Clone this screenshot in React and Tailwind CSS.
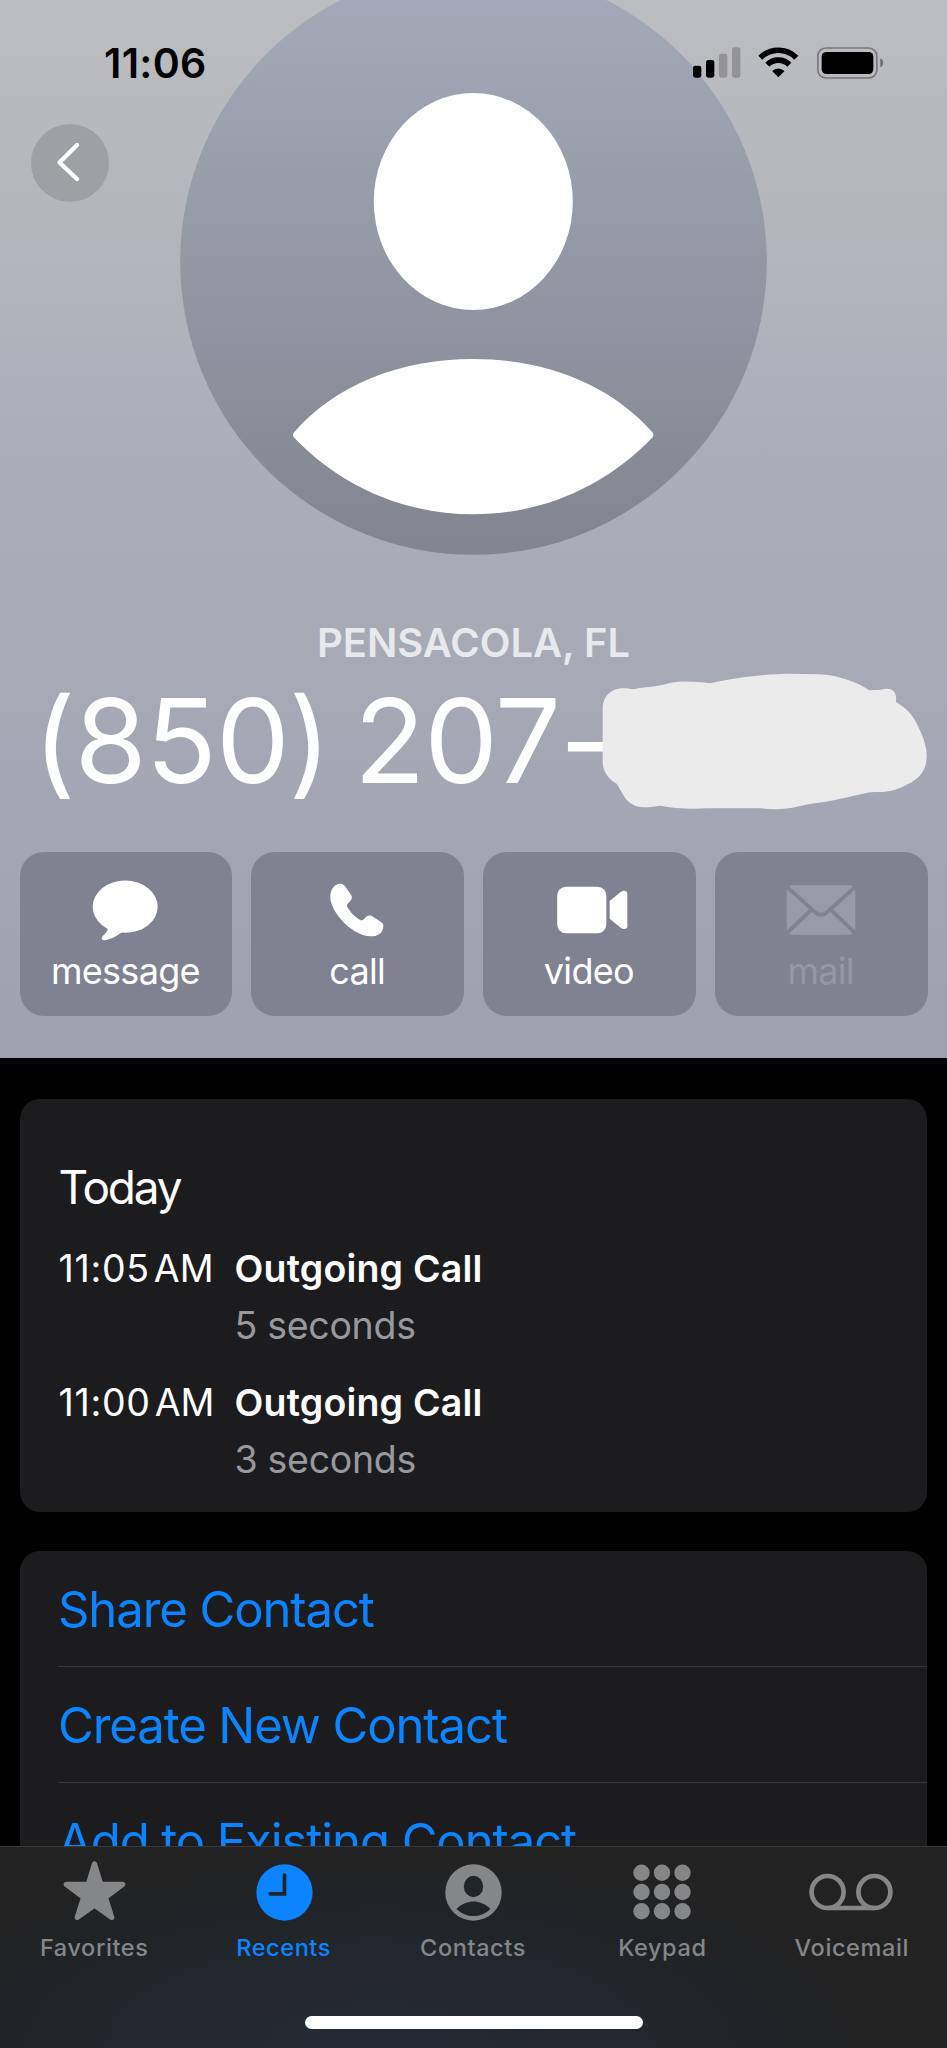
function SignalIcon() {
  return (
    <svg width="48" height="31" viewBox="656 142 144 93">
      <rect x="656" y="198" width="25" height="36" rx="7" fill="#000" />
      <rect x="695" y="181" width="25" height="53" rx="7" fill="#000" />
      <rect x="734" y="162" width="25" height="72" rx="7" fill="#939397" />
      <rect x="773" y="143" width="25" height="91" rx="7" fill="#939397" />
    </svg>
  );
}

function WifiIcon() {
  return (
    <svg width="41" height="31" viewBox="851 142 123 93" fill="none" stroke="#000" strokeWidth="17">
      <path d="M858 174A76.5 76.5 0 0 1 966 174" />
      <path d="M879 195A47 47 0 0 1 945 195" />
      <path d="M912 233L893.5 214A26 26 0 0 1 930.5 214Z" fill="#000" stroke="none" />
    </svg>
  );
}

function BatteryIcon() {
  return (
    <svg width="67" height="32" viewBox="1028 140 201 96">
      <rect x="1030.500" y="143" width="177" height="90" rx="24" fill="none" stroke="#77777b" strokeWidth="5" />
      <rect x="1042" y="155" width="155" height="66" rx="14" fill="#000" />
      <path d="M1218 174C1229 177 1229 198 1218 201Z" fill="#6b6b6f" />
    </svg>
  );
}

function Avatar() {
  return (
    <svg className="-mt-8 shrink-0" width="587" height="587" viewBox="180 -32 587 587">
      <defs>
        <linearGradient id="avatar" x1="0" y1="0" x2="0" y2="1">
          <stop offset="0" stopColor="#a5abba" />
          <stop offset="1" stopColor="#82858f" />
        </linearGradient>
      </defs>
      <circle cx="473.500" cy="261.500" r="293.300" fill="url(#avatar)" />
      <ellipse cx="473.300" cy="201.500" rx="99.500" ry="108.500" fill="#fff" />
      <path
        d="M293.500 433C335 385 400 359 473.300 359S611 385 653 433Q654 435.500 652.500 437.500C604 488 540 514.300 473.300 514.300S342 488 294 437.500Q292 435.500 293.500 433Z"
        fill="#fff"
      />
    </svg>
  );
}

function MessageIcon() {
  return (
    <svg className="mr-0.5" width="66" height="61" viewBox="277 149 198 183" fill="currentColor">
      <ellipse cx="376.500" cy="229" rx="97.500" ry="78.500" />
      <path d="M326 290C325 303 315 311 307 320C304 326 308 330 316 329.500C335 327 352 316 368 305Z" />
    </svg>
  );
}

function PhoneIcon() {
  return (
    <svg className="mr-0.5" width="54" height="54" viewBox="989 164 162 162" fill="currentColor">
      <path d="M990 205C990 182 1003 166 1020 166C1027 166 1032 170 1036 176L1051 198C1057 207 1055 212 1048 220L1041 228C1038 232 1041 236 1044 241C1053 254 1065 266 1078 274C1084 277 1087 276 1091 272L1097 266C1104 260 1112 261 1119 266L1142 281C1150 286 1150 294 1148 301C1144 316 1130 324 1112 324C1080 324 1045 300 1021 272C1003 250 990 226 990 205Z" />
    </svg>
  );
}

function VideoIcon() {
  return (
    <svg className="ml-1.5" width="71" height="48" viewBox="248 169 213 144" fill="currentColor">
      <rect x="248.500" y="171" width="147.500" height="140" rx="27" />
      <path d="M406 214L438 188C447 180 459 182 459 192V290C459 299 447 301 439 294L406 267Z" />
    </svg>
  );
}

function MailIcon() {
  return (
    <svg width="70" height="50" viewBox="936 166 210 150">
      <rect x="938" y="167" width="206" height="148" rx="16" fill="#979aa8" />
      <g fill="none" stroke="#808292" strokeWidth="11.500">
        <path d="M937 170L1022 247Q1041 264 1060 247L1145 170" />
        <path d="M1013 239L937 312" />
        <path d="M1069 239L1145 312" />
      </g>
    </svg>
  );
}

function StarIcon() {
  return (
    <svg className="-mt-[3px]" width="63" height="60" viewBox="188 180 189 180">
      <path
        d="M282.500 189L301 250H367L315 289L334 349L282.500 312L231 349L250 289L198 250H264Z"
        fill="currentColor"
        stroke="currentColor"
        strokeWidth="16"
        strokeLinejoin="round"
      />
    </svg>
  );
}

function ClockIcon() {
  return (
    <svg className="ml-px" width="57" height="57" viewBox="766.500 190.500 171 171">
      <circle cx="852" cy="276" r="84.500" fill="currentColor" />
      <path d="M852 224V280H809" fill="none" stroke="#202529" strokeWidth="11" strokeLinecap="round" />
    </svg>
  );
}

function ContactIcon() {
  return (
    <svg className="ml-px" width="57" height="57" viewBox="445 1863.500 57 57">
      <circle cx="473.500" cy="1892" r="28.200" fill="currentColor" />
      <ellipse cx="473.500" cy="1886" rx="9.700" ry="10.700" fill="#202529" />
      <path d="M456.500 1908.500C462 1903 468 1901 473.500 1901S485 1903 490.500 1908.500A24 24 0 0 1 456.500 1908.500Z" fill="#202529" />
    </svg>
  );
}

function KeypadIcon() {
  return (
    <svg width="58" height="56" viewBox="0 0 58 56" fill="currentColor">
      {[8.7, 28, 47.2].map((y) =>
        [8.5, 29, 49.5].map((x) => <circle key={`${x}-${y}`} cx={x} cy={y} r="8.200" />)
      )}
    </svg>
  );
}

function VoicemailIcon() {
  return (
    <svg className="mr-0.5" width="84" height="38" viewBox="0 0 84 38" fill="none" stroke="currentColor" strokeWidth="4.700">
      <circle cx="18.600" cy="19" r="16" />
      <circle cx="65.400" cy="19" r="16" />
      <path d="M18.600 35H65.400" />
    </svg>
  );
}

const actions = [
  { label: "message", icon: MessageIcon },
  { label: "call", icon: PhoneIcon },
  { label: "video", icon: VideoIcon },
  { label: "mail", icon: MailIcon, disabled: true },
];

const calls = [
  { time: "11:05", type: "Outgoing Call", duration: "5 seconds" },
  { time: "11:00", type: "Outgoing Call", duration: "3 seconds" },
];

const tabs = [
  { label: "Favorites", icon: StarIcon },
  { label: "Recents", icon: ClockIcon, active: true },
  { label: "Contacts", icon: ContactIcon },
  { label: "Keypad", icon: KeypadIcon },
  { label: "Voicemail", icon: VoicemailIcon },
];

function StatusBar() {
  return (
    <div className="absolute inset-x-0 top-0 flex items-start justify-between pl-[104px] pr-[63px] pt-[38px]">
      <span className="text-[41px] leading-[50px] font-semibold tracking-[0.3px] text-black">11:06</span>
      <div className="mt-[9px] flex items-start">
        <SignalIcon />
        <span className="ml-[17px]"><WifiIcon /></span>
        <span className="ml-[18px]"><BatteryIcon /></span>
      </div>
    </div>
  );
}

function ContactHeader() {
  return (
    <header className="relative flex h-[1058px] shrink-0 flex-col items-center overflow-hidden bg-[linear-gradient(180deg,#bcbdc1_0%,#b5b6bb_20%,#afb3bc_29%,#a9abb7_54%,#a4a6b3_76%,#9fa1ae_100%)]">
      <Avatar />
      <StatusBar />
      <button className="absolute left-[31px] top-[124px] flex h-[78px] w-[78px] items-center justify-center rounded-full bg-[#9fa0a4]">
        <svg className="-mt-0.5 mr-1" width="24" height="40" viewBox="0 0 24 40" fill="none" stroke="#fff" strokeWidth="4.300" strokeLinecap="round" strokeLinejoin="round">
          <path d="M21 3L3.500 20.500L21 37" />
        </svg>
      </button>

      <p className="mt-16 text-[40px] leading-[48px] font-semibold tracking-[-0.050px] whitespace-nowrap text-[#e8e9ec]">PENSACOLA, FL</p>

      <div className="relative mt-[3px] w-full pl-[33px]">
        <h1 className="text-[117px] leading-[142px] font-normal tracking-[-1.100px] [word-spacing:-8px] whitespace-nowrap text-white">(850) 207-</h1>
        <svg className="absolute left-[602px] top-[3px]" width="326" height="138" viewBox="384 218 978 414">
          <path
            d="M386 320C388 285 415 262 452 264Q465 264 476 267C500 260 540 262 590 247C620 241 670 243 708 249C780 232 880 220 950 220L1035 222C1090 224 1150 245 1186 270L1220 268C1250 260 1270 270 1266 305C1310 330 1325 360 1340 395C1360 440 1362 470 1353 500C1340 535 1310 548 1280 562C1240 580 1210 572 1180 577C1130 588 1060 605 1020 609C960 620 940 632 860 624L700 624C640 628 600 622 556 616C520 622 490 624 475 612C450 598 442 570 428 550C400 535 386 510 386 485Z"
            fill="#ebebeb"
          />
        </svg>
      </div>

      <div className="mt-10 grid w-full grid-cols-4 gap-[19px] px-[19.500px]">
        {actions.map(({ label, icon: Icon, disabled }) => (
          <button
            key={label}
            disabled={disabled}
            className={`flex h-[164px] flex-col items-center rounded-3xl bg-[#808292] pt-[26px] ${disabled ? "text-[#9598a5]" : "text-white"}`}
          >
            <span className="flex h-16 items-center"><Icon /></span>
            <span className="mt-[7px] mr-px text-[36px] leading-[44px] tracking-[-0.700px]">{label}</span>
          </button>
        ))}
      </div>
    </header>
  );
}

function CallLog() {
  return (
    <section className="mr-5 ml-[19.500px] mt-[41px] h-[413px] shrink-0 rounded-[20px] bg-[#1c1c1e] px-[39px] pt-[60px] text-white">
      <h2 className="text-[46px] leading-[56px] tracking-[-2.200px]">Today</h2>
      <div className="mt-[25px] flex flex-col gap-[19.500px] text-[37.500px] leading-[57px]">
        {calls.map((call) => (
          <div key={call.time} className="flex">
            <span className="w-44 shrink-0 whitespace-nowrap">
              <span className="tracking-[0.700px]">{call.time}</span>
              <span className="ml-1">AM</span>
            </span>
            <div>
              <p className="font-semibold tracking-[0.200px]">{call.type}</p>
              <p className="tracking-[-0.300px] text-[#98989f]">{call.duration}</p>
            </div>
          </div>
        ))}
      </div>
    </section>
  );
}

function ContactLinks() {
  return (
    <section className="mr-5 ml-[19.500px] mt-[39px] shrink-0 rounded-t-[20px] bg-[#1c1c1e] pl-[38.500px] text-[#0a84ff]">
      {["Share Contact", "Create New Contact", "Add to Existing Contact"].map((item) => (
        <a key={item} className="flex h-[116px] items-center border-b border-[#38383a] pt-[2px] text-[49px] tracking-[-1.080px] whitespace-nowrap">
          {item}
        </a>
      ))}
    </section>
  );
}

function TabBar() {
  return (
    <nav className="flex h-[202px] shrink-0 flex-col items-center border-t border-[#37393b] bg-[#222223] bg-[radial-gradient(ellipse_480px_190px_at_40%_100%,#252b35_0%,#23282f_45%,#202427_75%,transparent_100%)]">
      <div className="-ml-px grid w-full grid-cols-5 pt-[15px]">
        {tabs.map(({ label, icon: Icon, active }) => (
          <a key={label} className={`flex flex-col items-center ${active ? "text-[#0a84ff]" : "text-[#858688]"}`}>
            <span className="flex h-[60px] items-center"><Icon /></span>
            <span className="mt-[11px] text-[23.500px] leading-[30px] font-medium tracking-[0.600px]">{label}</span>
          </a>
        ))}
      </div>
      <div className="mt-[53px] h-[13px] w-[338px] rounded-full bg-white" />
    </nav>
  );
}

export default function App() {
  return (
    <div className="flex h-[2048px] w-[947px] flex-col overflow-hidden bg-black font-['Inter',sans-serif]">
      <main className="flex min-h-0 flex-1 flex-col overflow-hidden">
        <ContactHeader />
        <CallLog />
        <ContactLinks />
      </main>
      <TabBar />
    </div>
  );
}
